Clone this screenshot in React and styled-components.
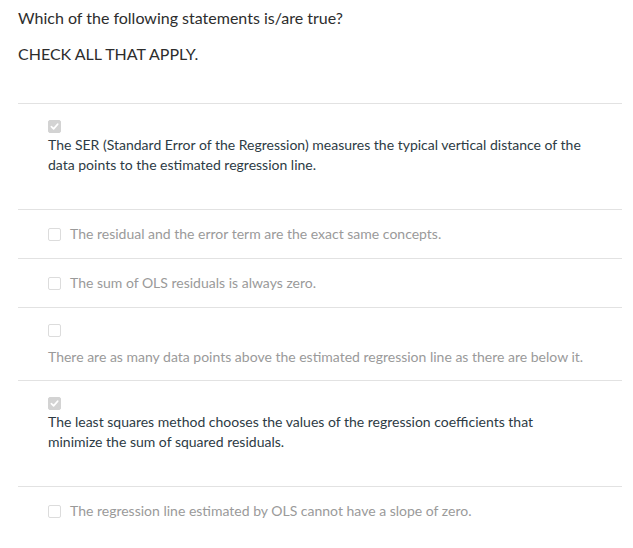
import React from "react";
import styled, { createGlobalStyle } from "styled-components";

const GlobalStyle = createGlobalStyle`
  body {
    margin: 0;
    background: #ffffff;
    font-family: Lato, "Open Sans", sans-serif;
  }
`;

const Page = styled.div`
  padding: 8px 11px 0 18px;
  color: #2d2d2d;
`;

const Question = styled.p`
  margin: 0;
  font-size: 16px;
  line-height: 20px;
`;

const Instruction = styled.p`
  margin: 16px 0 0;
  font-size: 16px;
  line-height: 20px;
`;

const OptionList = styled.div`
  margin-top: 39px;
  border-top: 1px solid #e2e2e2;
`;

const Option = styled.label`
  display: flex;
  flex-direction: ${(p) => (p.$stacked ? "column" : "row")};
  align-items: ${(p) => (p.$stacked ? "flex-start" : "center")};
  gap: ${(p) => (p.$stacked ? p.$gap : 9)}px;
  padding: ${(p) => (p.$stacked ? `16px 34px ${p.$bottom}px 30px` : "14px 34px 14px 30px")};
  border-bottom: ${(p) => (p.$last ? "none" : "1px solid #e2e2e2")};
`;

const Box = styled.span`
  flex: none;
  box-sizing: border-box;
  width: 13px;
  height: 13px;
  border-radius: 2px;
  display: flex;
  align-items: center;
  justify-content: center;
  background: ${(p) => (p.$checked ? "#d3d3d3" : "#ffffff")};
  border: 1px solid ${(p) => (p.$checked ? "#d3d3d3" : "#dcdcdc")};
`;

const Text = styled.span`
  font-size: 14px;
  line-height: 20px;
  color: ${(p) => (p.$checked ? "#2d3b45" : "#9a9a9a")};
`;

const Check = () => (
  <svg width="9" height="9" viewBox="0 0 10 10">
    <path d="M1.5 5.2 L4 7.6 L8.6 2.4" fill="none" stroke="#ffffff" strokeWidth="1.8" strokeLinecap="round" strokeLinejoin="round" />
  </svg>
);

const options = [
  {
    text: "The SER (Standard Error of the Regression) measures the typical vertical distance of the data points to the estimated regression line.",
    checked: true,
    stacked: true,
    gap: 2,
    bottom: 34,
  },
  { text: "The residual and the error term are the exact same concepts." },
  { text: "The sum of OLS residuals is always zero." },
  {
    text: "There are as many data points above the estimated regression line as there are below it.",
    stacked: true,
    gap: 10,
    bottom: 13,
  },
  {
    text: "The least squares method chooses the values of the regression coefficients that minimize the sum of squared residuals.",
    checked: true,
    stacked: true,
    gap: 2,
    bottom: 34,
  },
  { text: "The regression line estimated by OLS cannot have a slope of zero." },
];

export default function App() {
  return (
    <>
      <GlobalStyle />
      <Page>
        <Question>Which of the following statements is/are true?</Question>
        <Instruction>CHECK ALL THAT APPLY.</Instruction>
        <OptionList>
          {options.map((o, i) => (
            <Option
              key={i}
              $stacked={o.stacked}
              $gap={o.gap}
              $bottom={o.bottom}
              $last={i === options.length - 1}
            >
              <Box $checked={o.checked}>{o.checked && <Check />}</Box>
              <Text $checked={o.checked}>{o.text}</Text>
            </Option>
          ))}
        </OptionList>
      </Page>
    </>
  );
}
